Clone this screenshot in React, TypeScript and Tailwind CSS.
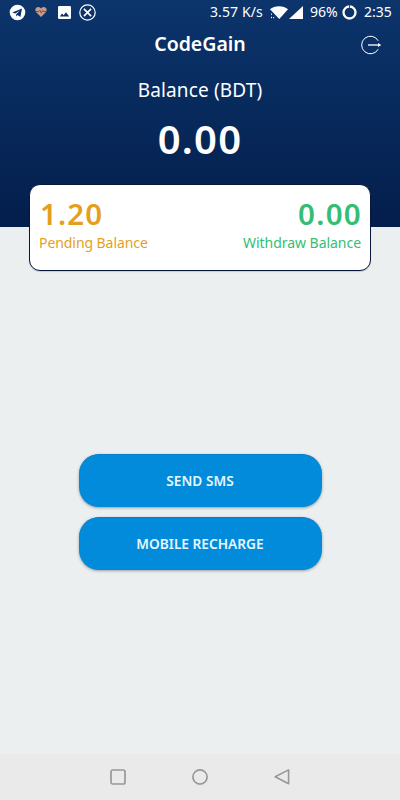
const StatusBar = () => {
  return (
    <div className="flex h-6 items-center justify-between pl-[9px] pr-2">
      <div className="flex items-center">
        <svg className="h-[17px] w-[17px]" viewBox="0 0 17 17">
          <circle cx="8.5" cy="8.5" r="7.8" fill="#fff" />
          <path d="M3.3 8.5 13 4.5 11.4 13 8.6 11 7.2 12.5V10.2L11 6.4 6.2 9.6Z" fill="#0c2f66" />
        </svg>
        <svg className="ml-[9px] h-3 w-3" viewBox="0 0 12 12">
          <path d="M6 11 1.2 6.2C-.8 3.8 1 .9 3.2 1 4.6 1 5.5 1.8 6 2.6 6.5 1.8 7.4 1 8.8 1 11 .9 12.8 3.8 10.8 6.2Z" fill="#c99a86" />
          <path d="M1 5.5H3.8L5 4.2 6.3 7 7.8 4.6 8.8 5.5H11" fill="none" stroke="#74545c" strokeWidth="1" />
        </svg>
        <svg className="ml-[11px] h-[13px] w-[13px]" viewBox="0 0 13 13">
          <rect width="13" height="13" rx="1.3" fill="#fff" />
          <path d="M1.8 10.5 4 7.4 5.7 9.3 8 6.2 11.2 10.5Z" fill="#0c2f66" />
        </svg>
        <svg className="ml-2 h-[17px] w-[17px]" viewBox="0 0 17 17" fill="none" stroke="#fff">
          <circle cx="8.5" cy="8.5" r="7.7" strokeWidth="1.2" />
          <path d="M4.9 4.9 12.1 12.1M12.1 4.9 4.9 12.1" strokeWidth="1.6" />
        </svg>
      </div>
      <div className="flex items-center text-[14px] leading-none">
        <span className="w-[54px] whitespace-nowrap tracking-[0.1px]">3.57 K/s</span>
        <svg className="ml-[6px] h-[13px] w-[19px]" viewBox="0 0 19 13">
          <path d="M0 3.3C4.5-.8 13.5-.8 18 3.3L9.3 13Z" fill="#fff" />
          <path d="M0 6V9L2.5 12H5.5L0 5Z" fill="#0c2f66" />
          <path d="M1.5 7.5v1.3M1.5 10.8v1.4M3.7 11v1.2" stroke="#fff" strokeWidth="1" />
        </svg>
        <svg className="h-[13px] w-[14px]" viewBox="0 0 14 13">
          <path d="M14 0V13H0Z" fill="#fff" />
        </svg>
        <span className="ml-[7px] w-[28px] whitespace-nowrap">96%</span>
        <svg className="ml-1 h-[15px] w-[15px]" viewBox="0 0 15 15" fill="none">
          <circle cx="7.5" cy="7.5" r="6" stroke="#fff" strokeWidth="2.3" />
          <path d="M7.5 0V3" stroke="#0c2f66" strokeWidth="0.8" />
        </svg>
        <span className="ml-[7px] w-[28px] whitespace-nowrap">2:35</span>
      </div>
    </div>
  );
};

const BalanceCard = () => {
  return (
    <div className="mx-auto mt-[22px] flex h-[87px] w-[342px] justify-between rounded-[11px] border border-[#06183e] bg-white px-[9px] pt-[11px] shadow-[0_1px_1px_rgba(0,0,0,0.15)]">
      <div className="text-[#e59f1e]">
        <p className="pl-px text-[29.5px] font-semibold leading-9 tracking-[1.1px]">1.20</p>
        <p className="text-[14px] leading-[22px] tracking-[-0.07px]">Pending Balance</p>
      </div>
      <div className="text-right text-[#34be75]">
        <p className="-mr-px text-[29.5px] font-semibold leading-9 tracking-[1.3px]">0.00</p>
        <p className="text-[14px] leading-[22px] tracking-[-0.04px]">Withdraw Balance</p>
      </div>
    </div>
  );
};

const ActionButton = ({ label }: { label: string }) => {
  return (
    <button className="h-[53px] w-[243px] rounded-[20px] border-t border-[#087fc6] bg-[#028bdb] pt-px text-[13.7px] font-semibold text-[#e5f8ff] shadow-[0_1px_3px_rgba(0,0,0,0.35)]">
      {label}
    </button>
  );
};

const NavBar = () => {
  return (
    <nav className="flex h-[46px] items-center justify-center gap-[66px] bg-[#eaeaea]">
      <svg className="h-4 w-4" viewBox="0 0 16 16" fill="none" stroke="#989898" strokeWidth="1.7">
        <rect x="1" y="1" width="14" height="14" rx="1.8" />
      </svg>
      <svg className="h-4 w-4" viewBox="0 0 16 16" fill="none" stroke="#989898" strokeWidth="1.7">
        <circle cx="8" cy="8" r="7.1" />
      </svg>
      <svg className="h-4 w-4" viewBox="0 0 16 16" fill="none" stroke="#989898" strokeWidth="1.6" strokeLinejoin="round">
        <path d="M14.6 0.9V14.7L1.2 7.8Z" />
      </svg>
    </nav>
  );
};

const App = () => {
  return (
    <div className="flex h-[800px] w-[400px] flex-col overflow-hidden bg-[#ebeff0] font-['Noto_Sans',sans-serif] text-white">
      <div className="h-[227px] shrink-0 bg-gradient-to-b from-[#0c356c] to-[#041e4c]">
        <StatusBar />
        <header className="grid h-10 grid-cols-[1fr_auto_1fr] items-center">
          <h1 className="col-start-2 text-[19.5px] font-semibold">CodeGain</h1>
          <svg className="mr-[18px] mt-[2px] h-5 w-[22px] justify-self-end" viewBox="0 0 22 20" fill="none" stroke="#fff">
            <path d="M18.2 5.8A8.8 8.8 0 1 0 18.2 14.2" strokeWidth="1" />
            <path d="M8 10H20" strokeWidth="1.3" />
            <path d="M18 8 21.3 10 18 12Z" fill="#fff" stroke="none" />
          </svg>
        </header>
        <p className="mt-3 text-center text-[19px] leading-7 tracking-[0.15px]">Balance (BDT)</p>
        <p className="mt-[12px] text-center text-[40px] font-semibold leading-[46px] tracking-[1.2px]">0.00</p>
        <BalanceCard />
      </div>

      <main className="flex flex-1 flex-col items-center gap-[10px] pt-[227px]">
        <ActionButton label="SEND SMS" />
        <ActionButton label="MOBILE RECHARGE" />
      </main>
      <NavBar />
    </div>
  );
};

export default App;
